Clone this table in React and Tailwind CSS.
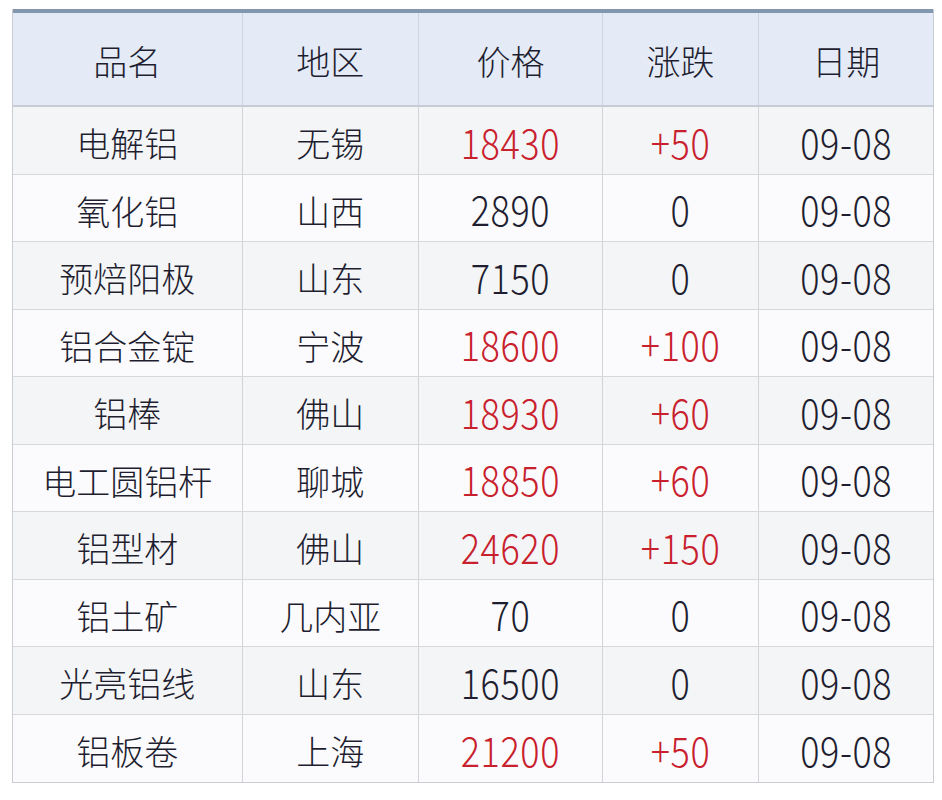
import React from "react";

const rows = [
  ["电解铝", "无锡", "18430", "+50", true],
  ["氧化铝", "山西", "2890", "0", false],
  ["预焙阳极", "山东", "7150", "0", false],
  ["铝合金锭", "宁波", "18600", "+100", true],
  ["铝棒", "佛山", "18930", "+60", true],
  ["电工圆铝杆", "聊城", "18850", "+60", true],
  ["铝型材", "佛山", "24620", "+150", true],
  ["铝土矿", "几内亚", "70", "0", false],
  ["光亮铝线", "山东", "16500", "0", false],
  ["铝板卷", "上海", "21200", "+50", true],
];

const widths = ["w-[230px]", "w-[177px]", "w-[184px]", "w-[157px]", "w-[174px]"];

function Num({ children }) {
  return <span className="inline-block scale-y-[1.15] tracking-[0.6px]">{children}</span>;
}

export default function App() {
  return (
    <div
      className="w-[942px] h-[800px] bg-white pt-[9px] pl-[12px] font-light"
      style={{ fontFamily: '"Noto Sans CJK SC", "Noto Sans", sans-serif' }}
    >
      <div className="w-[922px] border-l border-r border-b border-[#c9ccd2]">
        <div className="h-[4px] bg-[#8297ae]" />
        <div className="flex h-[94px] bg-[#e4ebf7] border-b-2 border-[#c6ccd6] text-[#1e1e30] text-[34px]">
          {["品名", "地区", "价格", "涨跌", "日期"].map((h, i) => (
            <div
              key={h}
              className={`${widths[i]} flex items-center justify-center pt-[2px] ${i < 4 ? "border-r border-[#cfd5de]" : ""}`}
            >
              {h}
            </div>
          ))}
        </div>
        {rows.map((r, idx) => (
          <div
            key={idx}
            className={`flex text-[34px] text-[#1e1e30] ${idx % 2 === 0 ? "h-[68px] bg-[#f4f5f7]" : "h-[67px] bg-[#fbfbfd]"} ${idx < rows.length - 1 ? "border-b border-[#d6d8dc]" : ""}`}
          >
            <div className={`${widths[0]} flex items-center justify-center pt-[4px] border-r border-[#d2d4d8]`}>{r[0]}</div>
            <div className={`${widths[1]} flex items-center justify-center pt-[4px] border-r border-[#d2d4d8]`}>{r[1]}</div>
            <div className={`${widths[2]} flex items-center justify-center border-r border-[#d2d4d8] text-[36px] ${r[4] ? "text-[#c8202c]" : ""}`}><Num>{r[2]}</Num></div>
            <div className={`${widths[3]} flex items-center justify-center border-r border-[#d2d4d8] text-[36px] ${r[4] ? "text-[#c8202c]" : ""}`}><Num>{r[3]}</Num></div>
            <div className={`${widths[4]} flex items-center justify-center text-[36px]`}><Num>09-08</Num></div>
          </div>
        ))}
      </div>
    </div>
  );
}
